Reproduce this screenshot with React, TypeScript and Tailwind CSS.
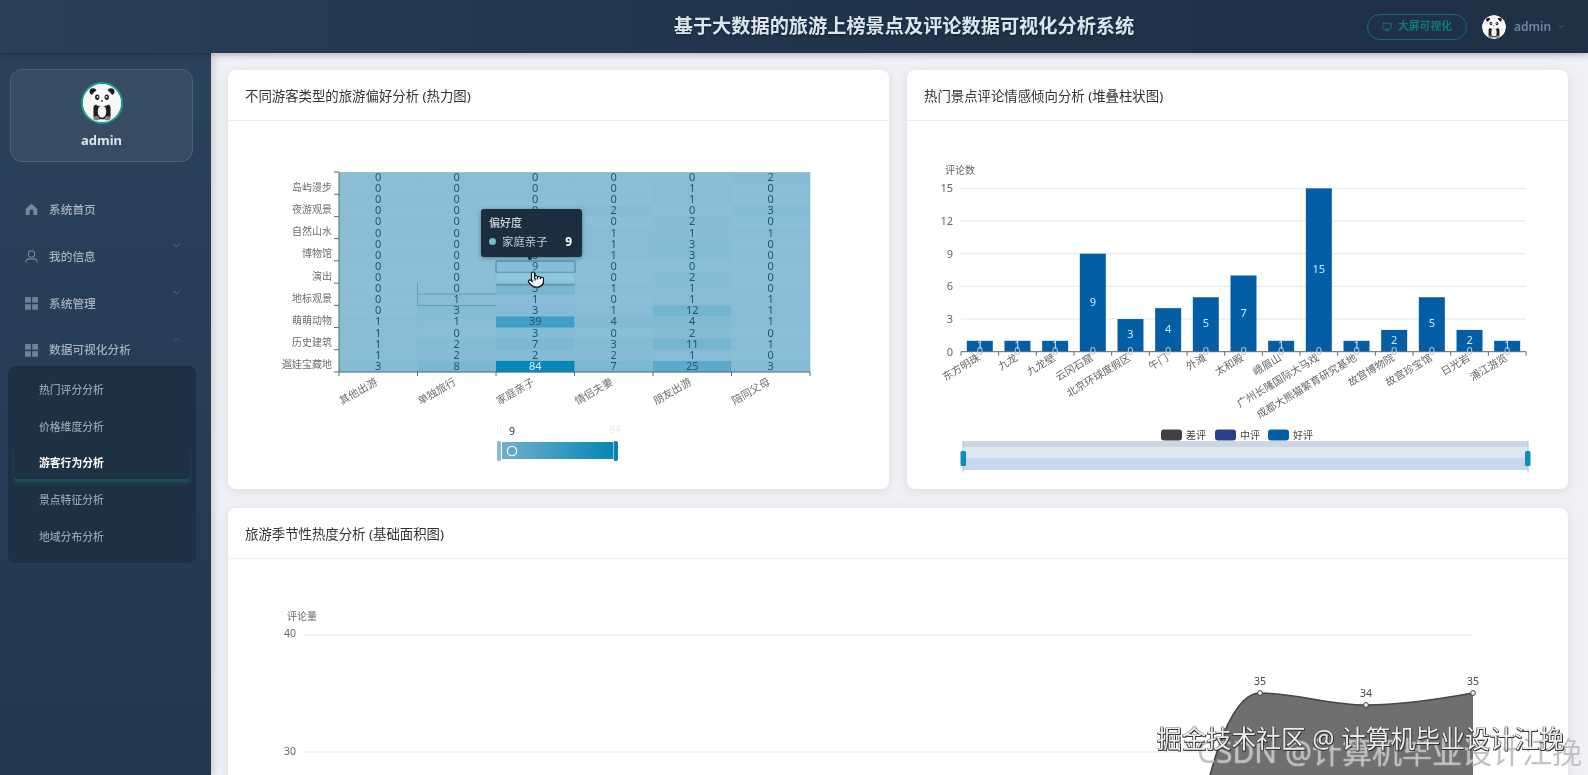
import React from "react";
import { Monitor, ChevronDown, ChevronUp, Pointer } from "lucide-react";

const Panda = () => (
  <svg viewBox="0 0 40 40" className="w-full h-full block">
    <circle cx="20" cy="20" r="20" fill="#f7f6f4" />
    <circle cx="10.5" cy="8" r="3.6" fill="#1b1b1b" />
    <circle cx="29.5" cy="8" r="3.6" fill="#1b1b1b" />
    <path d="M11 25c0-3 4-5 9-5s9 2 9 5v9c0 2-3 3-4 3H15c-1 0-4-1-4-3z" fill="#1f1f1f" />
    <ellipse cx="20" cy="29" rx="4.5" ry="6.5" fill="#f4f4f4" />
    <ellipse cx="20" cy="14.5" rx="11" ry="9" fill="#fff" stroke="#ddd" strokeWidth=".4" />
    <ellipse cx="15" cy="14" rx="2.3" ry="2.9" fill="#222" />
    <ellipse cx="25" cy="14" rx="2.3" ry="2.9" fill="#222" />
    <circle cx="15.3" cy="13.6" r=".9" fill="#fff" />
    <circle cx="24.7" cy="13.6" r=".9" fill="#fff" />
    <ellipse cx="20" cy="18" rx="1.2" ry=".8" fill="#222" />
    <ellipse cx="14" cy="36" rx="3" ry="2.2" fill="#8a7d75" />
    <ellipse cx="26" cy="36" rx="3" ry="2.2" fill="#8a7d75" />
  </svg>
);

const HomeIcon = () => (
  <svg viewBox="0 0 14 14" className="w-[13px] h-[13px]" fill="#76889a">
    <path d="M7 .8 13.2 6.2V13H9V9a2 2 0 0 0-4 0v4H.8V6.2z" />
  </svg>
);
const UserIcon = () => (
  <svg viewBox="0 0 14 14" className="w-[13px] h-[13px]" fill="none" stroke="#76889a" strokeWidth="1.2">
    <circle cx="7" cy="4.2" r="3.4" />
    <path d="M1 13.5v-1.2A3.2 3.2 0 0 1 4.2 9.6h5.6a3.2 3.2 0 0 1 3.2 2.7v1.2" />
  </svg>
);
const GridIcon = () => (
  <svg viewBox="0 0 13 13" className="w-[13px] h-[13px]" fill="#6f8294">
    <rect x="0" y="0" width="5.8" height="5.6" />
    <rect x="7.2" y="0" width="5.8" height="5.6" />
    <rect x="0" y="7.2" width="5.8" height="5.6" />
    <rect x="7.2" y="7.2" width="5.8" height="5.6" />
  </svg>
);

const subItems = ["热门评分分析", "价格维度分析", "游客行为分析", "景点特征分析", "地域分布分析"];

const Sidebar = () => (
  <aside className="w-[211px] shrink-0 h-full bg-gradient-to-b from-[#2a425a] to-[#22384f] shadow-[2px_0_8px_rgba(0,0,0,0.18)] z-10 overflow-hidden">
    <div className="mx-[10px] mt-[16px] w-[183px] h-[93px] rounded-[12px] border border-[#4a6177] bg-[#374c62] flex flex-col items-center pt-[12px]">
      <div className="w-[42px] h-[42px] rounded-full border-2 border-[#14a090] overflow-hidden bg-white">
        <Panda />
      </div>
      <div className="mt-[7px] text-[13px] leading-[18px] font-bold text-[#d6e4ee]">admin</div>
    </div>
    <nav className="mt-[24.6px]">
      <div className="h-[46.7px] flex items-center pl-[25px]">
        <HomeIcon />
        <span className="ml-[11px] text-[11.7px] font-medium text-[#a5b2be]">系统首页</span>
      </div>
      <div className="h-[46.7px] flex items-center pl-[25px]">
        <UserIcon />
        <span className="ml-[11px] text-[11.7px] font-medium text-[#a5b2be]">我的信息</span>
        <ChevronDown className="ml-auto mr-[29px] mb-[22px] w-[11px] h-[11px] text-[#5f7488]" />
      </div>
      <div className="h-[46.7px] flex items-center pl-[25px]">
        <GridIcon />
        <span className="ml-[11px] text-[11.7px] font-medium text-[#a5b2be]">系统管理</span>
        <ChevronDown className="ml-auto mr-[29px] mb-[22px] w-[11px] h-[11px] text-[#5f7488]" />
      </div>
      <div className="h-[46.7px] flex items-center pl-[25px]">
        <GridIcon />
        <span className="ml-[11px] text-[11.7px] font-medium text-[#a5b2be]">数据可视化分析</span>
        <ChevronUp className="ml-auto mr-[29px] mb-[22px] w-[11px] h-[11px] text-[#1f7a7a]" />
      </div>
    </nav>
    <div className="-mt-[7px] mx-[8px] w-[188px] h-[197px] rounded-[8px] bg-[#1e3043] pt-[5.7px]">
      {subItems.map((s, i) => (
        <div
          key={s}
          className={
            i === 2
              ? "h-[36.6px] mx-[6px] pl-[25px] flex items-center rounded-[4px] text-[10.8px] font-bold text-white shadow-[inset_0_-3px_0_#1c4d52,0_2px_5px_rgba(20,120,110,0.3)]"
              : "h-[36.6px] mx-[6px] pl-[25px] flex items-center text-[10.8px] font-medium text-[#93a1ae]"
          }
        >
          {s}
        </div>
      ))}
    </div>
  </aside>
);

const Header = () => (
  <header className="h-[53px] shrink-0 flex items-center bg-gradient-to-r from-[#2a4057] via-[#20344b] to-[#1f3045] shadow-[0_2px_6px_rgba(0,0,0,0.25)] z-20 relative">
    <h1 className="flex-1 text-center pl-[441px] text-[19.2px] font-bold text-[#dbe5ee] [text-shadow:0_1px_3px_rgba(0,0,0,0.4)]">
      基于大数据的旅游上榜景点及评论数据可视化分析系统
    </h1>
    <div className="flex items-center w-[221px]">
      <div className="w-[100px] h-[26px] rounded-full border border-[#0f6f72] flex items-center justify-center gap-[6px] text-[#0c7d74]">
        <Monitor className="w-[10px] h-[10px]" />
        <span className="text-[10.8px] font-bold">大屏可视化</span>
      </div>
      <div className="ml-[15px] w-[24px] h-[24px] rounded-full overflow-hidden">
        <Panda />
      </div>
      <span className="ml-[8px] text-[12px] font-semibold text-[#6d87a0]">admin</span>
      <ChevronDown className="ml-[6px] w-[9px] h-[9px] text-[#52687d]" />
    </div>
  </header>
);

const Card = ({ title, wide, children }: { title: string; wide?: boolean; children: React.ReactNode }) => (
  <section className={wide ? "col-span-2 h-[500px] rounded-[8px] bg-white shadow-[0_2px_12px_rgba(0,0,0,0.09)] overflow-hidden" : "h-[419px] rounded-[8px] bg-white shadow-[0_2px_12px_rgba(0,0,0,0.09)] overflow-hidden"}>
    <div className="h-[51px] border-b border-[#ebeef3] pl-[17px] pt-[3px] flex items-center text-[13.4px] text-[#333]">{title}</div>
    {children}
  </section>
);

const heat: number[][] = [
  [0, 0, 0, 0, 0, 2],
  [0, 0, 0, 0, 1, 0],
  [0, 0, 0, 0, 1, 0],
  [0, 0, 0, 2, 0, 3],
  [0, 0, 0, 0, 2, 0],
  [0, 0, 0, 1, 1, 1],
  [0, 0, 0, 1, 3, 0],
  [0, 0, 0, 1, 3, 0],
  [0, 0, 9, 0, 0, 0],
  [0, 0, 1, 0, 2, 0],
  [0, 0, 3, 1, 1, 0],
  [0, 1, 1, 0, 1, 1],
  [0, 3, 3, 1, 12, 1],
  [1, 1, 39, 4, 4, 1],
  [1, 0, 3, 0, 2, 0],
  [1, 2, 7, 3, 11, 1],
  [1, 2, 2, 2, 1, 0],
  [3, 8, 84, 7, 25, 3],
];
const heatY = ["岛屿漫步", "夜游观景", "自然山水", "博物馆", "演出", "地标观景", "萌萌动物", "历史建筑", "遛娃宝藏地"];
const heatX = ["其他出游", "单独旅行", "家庭亲子", "情侣夫妻", "朋友出游", "陪同父母"];

const heatColor = (v: number) => {
  const t = Math.min(1, v / 70);
  const a = [138, 189, 214];
  const b = [5, 135, 185];
  return `rgb(${a.map((c, i) => Math.round(c + (b[i] - c) * t)).join(",")})`;
};

const Heatmap = () => {
  const L = 339, T = 172, CW = 78.5, RH = 200 / 18;
  return (
    <svg viewBox="228 121 661 368" className="block w-[661px] h-[368px]">
      <defs>
        <linearGradient id="vm" x1="0" x2="1" y1="0" y2="0">
          <stop offset="0" stopColor="#6fb0cd" />
          <stop offset="1" stopColor="#0786b4" />
        </linearGradient>
      </defs>
      <rect x={L} y={T} width={471} height={200} fill="#8abdd6" />
      {heat.map((row, r) =>
        row.map((v, c) => <rect key={`${r}-${c}`} x={L + c * CW} y={T + r * RH} width={CW + 0.3} height={RH + 0.3} fill={heatColor(v)} />)
      )}
      <rect x={L} y={T} width={471} height={1} fill="#8cc6d2" />
      {/* hover remnants */}
      <rect x={496} y={261} width={79} height={11.5} fill="#86bdd8" stroke="#5f93ad" strokeWidth="1.4" rx="1" />
      <rect x={496} y={273} width={79} height={10} fill="#90c6e0" stroke="#7fb2cb" strokeWidth="0.8" />
      <rect x={496} y={284} width={78.5} height={10.5} fill="#79b5cf" />
      <rect x={496} y={284} width={78.5} height={1.5} fill="#5b93ad" />
      <path d="M417.5 283V305.5H496M417.5 294H496" fill="none" stroke="#5f93ad" strokeWidth="0.8" />
      {heat.map((row, r) =>
        row.map((v, c) => (
          <text
            key={`t${r}-${c}`}
            x={L + (c + 0.5) * CW}
            y={T + (r + 0.5) * RH + 3.4}
            textAnchor="middle"
            fontSize="11"
            fill={v === 84 ? "#d5f0f8" : "#1f5674"}
          >
            {v}
          </text>
        ))
      )}
      <path d="M339 172V372H810" fill="none" stroke="#5c6b75" strokeWidth="1" />
      {Array.from({ length: 10 }).map((_, i) => (
        <line key={i} x1={334} x2={339} y1={T + i * 22.22} y2={T + i * 22.22} stroke="#5c6b75" />
      ))}
      {Array.from({ length: 7 }).map((_, i) => (
        <line key={i} x1={L + i * CW} x2={L + i * CW} y1={372} y2={376} stroke="#5c6b75" />
      ))}
      {heatY.map((s, i) => (
        <text key={s} x={332} y={T + (i * 2 + 1.5) * RH + 2} textAnchor="end" fontSize="10" fill="#6e6e6e">
          {s}
        </text>
      ))}
      {heatX.map((s, i) => (
        <text key={s} transform={`translate(${L + (i + 0.5) * CW},384) rotate(-30)`} textAnchor="end" fontSize="10.5" fill="#6e6e6e">
          {s}
        </text>
      ))}
      <text x="499" y="433" textAnchor="middle" fontSize="10" fill="#eceff2">0</text>
      <text x="512" y="435" textAnchor="middle" fontSize="10.5" fill="#333">9</text>
      <text x="615" y="433" textAnchor="middle" fontSize="10" fill="#e6eaee">84</text>
      <rect x="502" y="442" width="111" height="17" fill="url(#vm)" />
      <rect x="497" y="441" width="4" height="20" rx="1.5" fill="#8fbcd4" />
      <rect x="613.5" y="441" width="4.5" height="20" rx="2" fill="#0a82ad" />
      <circle cx="512" cy="451" r="4.6" fill="#5da6c4" stroke="#f2f8fb" strokeWidth="1.4" />
    </svg>
  );
};

const cats = ["东方明珠", "九龙", "九龙壁", "云冈石窟", "北京环球度假区", "午门", "外滩", "太和殿", "峨眉山", "广州长隆国际大马戏", "成都大熊猫繁育研究基地", "故宫博物院", "故宫珍宝馆", "日光岩", "浦江游览"];
const vals = [1, 1, 1, 9, 3, 4, 5, 7, 1, 15, 1, 2, 5, 2, 1];

const Stacked = () => {
  const L = 962, CW = 37.67, Y0 = 351.7, U = 10.89;
  return (
    <svg viewBox="908 121 661 368" className="block w-[661px] h-[368px]">
      <text x="946" y="174" fontSize="10" fill="#666">评论数</text>
      {[0, 3, 6, 9, 12, 15].map((v) => (
        <g key={v}>
          {v > 0 && <line x1={L} x2={1527} y1={Y0 - v * U} y2={Y0 - v * U} stroke="#e4e6ea" />}
          <text x="954" y={Y0 - v * U + 4} textAnchor="end" fontSize="11" fill="#666">{v}</text>
        </g>
      ))}
      {vals.map((v, i) => (
        <rect key={i} x={L + i * CW + 5.8} y={Y0 - v * U} width={26} height={v * U} fill="#045ea6" />
      ))}
      <line x1={L} x2={1527} y1={Y0} y2={Y0} stroke="#666" />
      {Array.from({ length: 16 }).map((_, i) => (
        <line key={i} x1={L + i * CW} x2={L + i * CW} y1={Y0} y2={Y0 + 4} stroke="#666" />
      ))}
      {cats.map((s, i) => (
        <text key={s} transform={`translate(${L + (i + 0.5) * CW + 1},${Y0 + 8}) rotate(-31)`} textAnchor="end" fontSize="10.4" fill="#666">
          {s}
        </text>
      ))}
      {vals.map((v, i) => (
        <g key={i} fontSize="11" textAnchor="middle">
          <text x={L + (i + 0.5) * CW} y={Y0 - (v * U) / 2 + 3} fill="#cfe8ff">{v}</text>
          <text x={L + (i + 0.5) * CW} y={Y0 + 3.5} fill="#a3cbec">0</text>
        </g>
      ))}
      <rect x="1162" y="429.5" width="21" height="11" rx="3" fill="#3f4144" />
      <text x="1187" y="438.5" fontSize="10" fill="#444">差评</text>
      <rect x="1216" y="429.5" width="21" height="11" rx="3" fill="#29408c" />
      <text x="1241" y="438.5" fontSize="10" fill="#444">中评</text>
      <rect x="1269" y="429.5" width="21" height="11" rx="3" fill="#045ea6" />
      <text x="1294" y="438.5" fontSize="10" fill="#444">好评</text>
      <rect x="964" y="441" width="565" height="6" fill="#cdd6e5" />
      <rect x="964" y="447" width="565" height="11" fill="#dfe7f0" />
      <rect x="964" y="458" width="565" height="12" fill="#c9d6ef" />
      <line x1="964" x2="964" y1="441" y2="472" stroke="#b6c0cf" />
      <line x1="1529" x2="1529" y1="441" y2="472" stroke="#b6c0cf" />
      <rect x="961.5" y="451" width="5.5" height="15" rx="1.5" fill="#0a8fbc" />
      <rect x="1526" y="451" width="5.5" height="15" rx="1.5" fill="#0a8fbc" />
    </svg>
  );
};

const Area = () => (
  <svg viewBox="228 559 1340 216" className="block w-[1340px] h-[216px]">
    <text x="287" y="620" fontSize="10" fill="#666">评论量</text>
    <line x1="304" x2="1473" y1="635" y2="635" stroke="#e6e8ec" />
    <line x1="304" x2="1473" y1="752" y2="752" stroke="#e6e8ec" />
    <text x="296" y="637" textAnchor="end" fontSize="10.5" fill="#666">40</text>
    <text x="296" y="755" textAnchor="end" fontSize="10.5" fill="#666">30</text>
    <path d="M1190 860C1205 790 1225 693 1260 693C1295 693 1330 705 1366 705C1400 705 1440 699 1473 693V900H1190Z" fill="#6f6f6f" />
    <path d="M1190 860C1205 790 1225 693 1260 693C1295 693 1330 705 1366 705C1400 705 1440 699 1473 693" fill="none" stroke="#474747" strokeWidth="1.6" />
    {[[1260, 693, 35], [1366, 705, 34], [1473, 693, 35]].map(([x, y, v]) => (
      <g key={x}>
        <circle cx={x} cy={y} r="2.4" fill="#eee" stroke="#444" strokeWidth="1" />
        <text x={x} y={y - 8} textAnchor="middle" fontSize="10.5" fill="#444">{v}</text>
      </g>
    ))}
  </svg>
);

export default function App() {
  return (
    <div className="relative w-full h-screen overflow-hidden flex flex-col bg-[#eff1f5] [font-family:'Noto_Sans','Noto_Sans_CJK_SC',sans-serif] [filter:blur(0.35px)]">
      <Header />
      <div className="flex-1 flex min-h-0">
        <Sidebar />
        <main className="flex-1 min-w-0 h-full overflow-hidden pl-[17px] pr-[20px] pt-[17px]">
          <div className="grid grid-cols-2 gap-x-[18px] gap-y-[19px]">
            <Card title="不同游客类型的旅游偏好分析 (热力图)">
              <Heatmap />
            </Card>
            <Card title="热门景点评论情感倾向分析 (堆叠柱状图)">
              <Stacked />
            </Card>
            <Card wide title="旅游季节性热度分析 (基础面积图)">
              <Area />
            </Card>
          </div>
        </main>
      </div>

      {/* tooltip over the heatmap */}
      <div className="absolute left-[481px] top-[209px] w-[101px] h-[48px] rounded-[3px] bg-[#1c2d3f] shadow-[0_1px_4px_rgba(0,0,0,0.35)] px-[8px] pt-[6px] z-30">
        <div className="text-[11px] leading-[15px] font-medium text-[#c9d2da]">偏好度</div>
        <div className="mt-[4px] flex items-center text-[11.4px] leading-[15px] text-[#c2ccd5]">
          <span className="w-[7px] h-[7px] rounded-full bg-[#6fc0c8]" />
          <span className="ml-[6px]">家庭亲子</span>
          <span className="ml-auto mr-[2px] font-bold text-white text-[12px]">9</span>
        </div>
      </div>
      <div className="absolute left-[528px] top-[256px] w-[4px] h-[4px] rounded-full bg-[#1c2d3f] z-30" />
      <Pointer className="absolute left-[527px] top-[269px] w-[18px] h-[21px] z-30 text-[#111] fill-white" strokeWidth={1.6} />

      {/* watermarks */}
      <div className="absolute left-[1197px] top-[732px] text-[30px] leading-[40px] whitespace-nowrap text-[#9a9a9a]/60 [text-shadow:0_0_1px_#fff] z-30">
        CSDN @计算机毕业设计江挽
      </div>
      <div className="absolute left-[1157px] top-[722px] text-[24.8px] leading-[32px] whitespace-nowrap text-white/90 [text-shadow:1px_1px_0_#333,-0.5px_-0.5px_0_#333,0.5px_-0.5px_0_#333,-0.5px_0.5px_0_#333] z-30">
        掘金技术社区 @ 计算机毕业设计江挽
      </div>
    </div>
  );
}
